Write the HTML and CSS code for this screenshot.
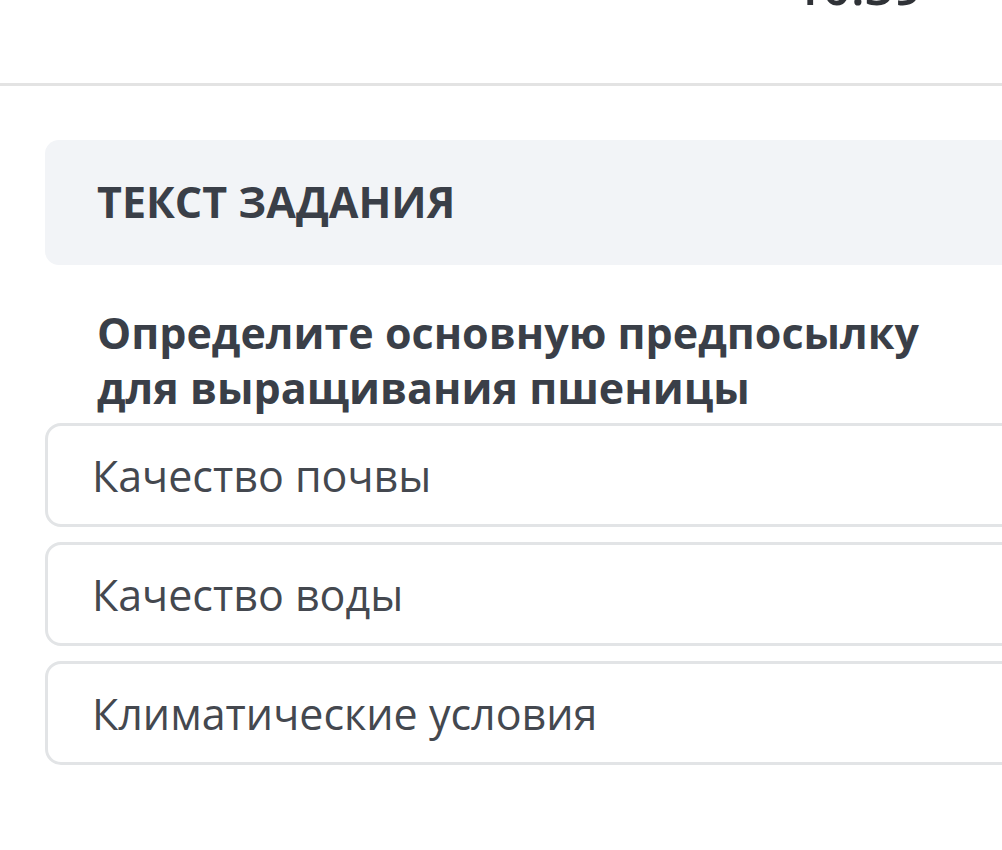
FILE: index.html
```html
<!DOCTYPE html>
<html lang="ru">
<head>
<meta charset="utf-8">
<title>Текст задания</title>
<link rel="stylesheet" href="styles.css">
</head>
<body>
<header class="statusbar">
  <span class="time">10:39</span>
</header>
<main class="main">
  <section class="task-card">
    <h2 class="task-title">ТЕКСТ ЗАДАНИЯ</h2>
  </section>
  <p class="question">Определите основную предпосылку для выращивания пшеницы</p>
  <ul class="options">
    <li class="option">Качество почвы</li>
    <li class="option">Качество воды</li>
    <li class="option">Климатические условия</li>
  </ul>
</main>
</body>
</html>
```
FILE: styles.css
```css
html, body {
  margin: 0;
  padding: 0;
  background: #ffffff;
  overflow: hidden;
}
body {
  width: 1002px;
  height: 850px;
  font-family: "Open Sans", "Noto Sans", sans-serif;
  color: #3b4049;
}
.statusbar {
  height: 83px;
  border-bottom: 3px solid #e3e3e3;
  display: flex;
  justify-content: flex-end;
  align-items: flex-start;
  padding-right: 80px;
  overflow: hidden;
}
.time {
  font-size: 50px;
  font-weight: 600;
  line-height: 50px;
  margin-top: -39px;
  color: #2f3237;
}
.main {
  padding-left: 45px;
}
.task-card {
  margin-top: 54px;
  width: 1000px;
  height: 125px;
  box-sizing: border-box;
  padding: 34px 0 36px 52px;
  background: #f2f4f7;
  border-radius: 14px;
}
.task-title {
  margin: 0;
  font-size: 43px;
  line-height: 55px;
  font-weight: 700;
  color: #3a3f48;
}
.question {
  margin: 40px 0 0 0;
  padding-left: 52px;
  width: 850px;
  font-size: 43px;
  line-height: 55px;
  font-weight: 700;
  color: #3a3f48;
}
.options {
  list-style: none;
  margin: 8px 0 0 0;
  padding: 0;
  display: flex;
  flex-direction: column;
  gap: 15px;
}
.option {
  width: 1000px;
  height: 104px;
  box-sizing: border-box;
  border: 3px solid #e2e4e6;
  border-radius: 16px;
  padding-left: 44px;
  display: flex;
  align-items: center;
  font-size: 43px;
  line-height: 55px;
  font-weight: 400;
  color: #44484f;
}
```
